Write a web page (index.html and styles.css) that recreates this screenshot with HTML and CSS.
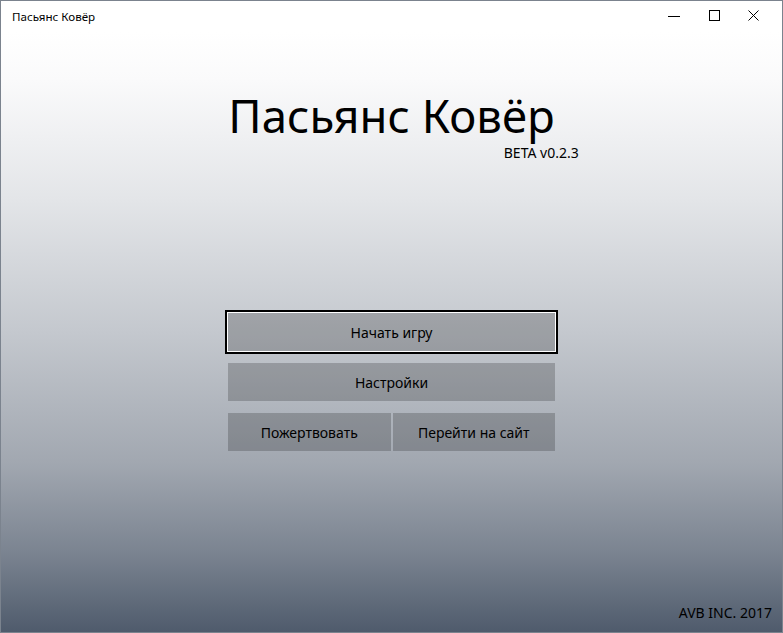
FILE: index.html
```html
<!DOCTYPE html>
<html lang="ru">
<head>
<meta charset="utf-8">
<title>Пасьянс Ковёр</title>
<link rel="stylesheet" href="styles.css">
</head>
<body>
<div class="window">
  <div class="titlebar">
    <span class="app-title">Пасьянс Ковёр</span>
    <div class="controls">
      <span class="ctl"><svg width="12" height="12" viewBox="0 0 12 12"><path d="M0 6.5H12" stroke="#000" stroke-width="1"/></svg></span>
      <span class="ctl"><svg width="12" height="12" viewBox="0 0 12 12"><rect x="1.5" y="0.5" width="10" height="10" fill="none" stroke="#000" stroke-width="1"/></svg></span>
      <span class="ctl"><svg width="12" height="12" viewBox="0 0 12 12"><path d="M0.5 0.5L10.5 10.5M10.5 0.5L0.5 10.5" stroke="#000" stroke-width="1"/></svg></span>
    </div>
  </div>
  <div class="content">
    <div class="heading">
      <h1 class="title">Пасьянс Ковёр</h1>
      <div class="version">BETA v0.2.3</div>
    </div>
    <div class="menu">
      <button class="btn focused">Начать игру</button>
      <button class="btn">Настройки</button>
      <div class="row">
        <button class="btn">Пожертвовать</button>
        <button class="btn">Перейти на сайт</button>
      </div>
    </div>
    <div class="footer">AVB INC. 2017</div>
  </div>
</div>
</body>
</html>
```
FILE: styles.css
```css
* { box-sizing: border-box; }
html, body { margin: 0; padding: 0; }
body {
  width: 783px;
  height: 633px;
  font-family: "Segoe UI", "Noto Sans", "Open Sans", sans-serif;
  color: #000;
}
.window {
  width: 783px;
  height: 633px;
  border: 1px solid #7b838e;
  display: flex;
  flex-direction: column;
}
.titlebar {
  height: 31px;
  background: #fff;
  display: flex;
  align-items: center;
  justify-content: space-between;
}
.app-title {
  font-size: 11.6px;
  padding-left: 11px;
  margin-top: -1px;
}
.controls {
  display: flex;
  padding-right: 8px;
  margin-top: -1px;
}
.ctl {
  width: 40px;
  height: 30px;
  display: flex;
  align-items: center;
  justify-content: center;
}
.ctl svg { display: block; }
.content {
  flex: 1;
  display: flex;
  flex-direction: column;
  align-items: center;
  background: linear-gradient(to bottom, #ffffff 0%, #fafafb 8%, #e3e5e8 28%, #c4c8ce 50%, #a1a7b0 72%, #7a8390 87%, #4f5b6c 100%);
}
.heading {
  margin-top: 58px;
  display: flex;
  flex-direction: column;
}
.title {
  margin: 0;
  font-weight: 400;
  font-size: 45.5px;
  line-height: 50px;
  letter-spacing: 0;
}
.version {
  align-self: flex-end;
  margin-right: -24px;
  margin-top: 4px;
  font-size: 14px;
  line-height: 18px;
}
.menu {
  margin-top: 151px;
  width: 327px;
  display: flex;
  flex-direction: column;
  gap: 12px;
}
.row {
  display: flex;
  gap: 2px;
}
.row .btn { flex: 1; }
.btn {
  height: 38px;
  border: 0;
  background: rgba(0, 0, 0, 0.2);
  font-family: inherit;
  font-size: 14px;
  color: #000;
  padding: 0;
}
.focused {
  outline: 2px solid #000;
  outline-offset: 1px;
  box-shadow: 0 0 0 1px #fff;
}
.footer {
  margin-top: auto;
  align-self: flex-end;
  font-size: 14px;
  line-height: 18px;
  padding-right: 10px;
  padding-bottom: 10px;
}
```
